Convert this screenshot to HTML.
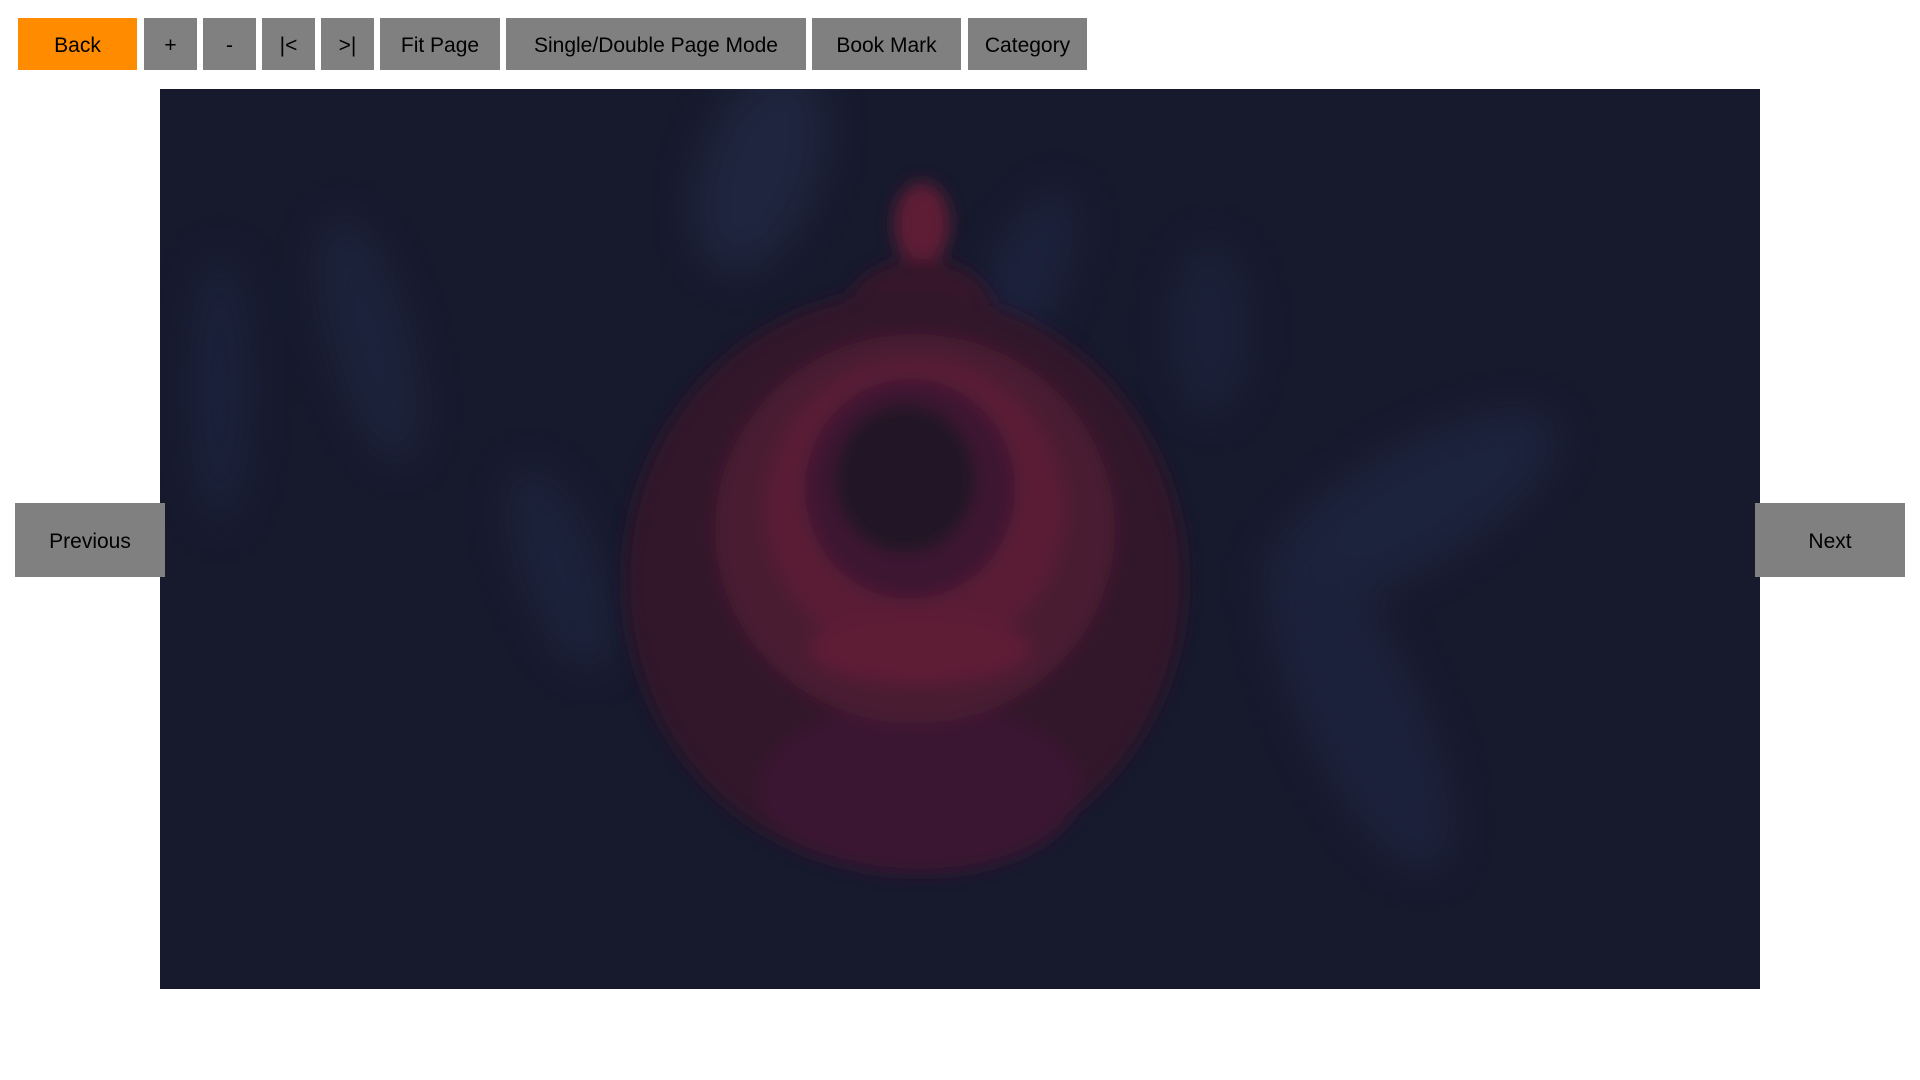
<!DOCTYPE html>
<html><head><meta charset="utf-8"><style>
html,body{margin:0;padding:0;width:1920px;height:1080px;background:#fff;overflow:hidden;font-family:"Segoe UI","Liberation Sans",sans-serif;}
.b{position:absolute;top:18px;height:52px;background:#808080;color:#000;font-size:21px;display:flex;align-items:center;justify-content:center;box-sizing:border-box;padding-top:4px;}
.img{position:absolute;left:160px;top:89px;width:1600px;height:900px;background:#171a2d;overflow:hidden;}
.nav{position:absolute;top:503px;height:74px;background:#808080;font-size:21px;display:flex;align-items:center;justify-content:center;box-sizing:border-box;padding-top:4px;}
</style></head><body>
<div class="b" style="left:18px;width:119px;background:#ff8c00">Back</div>
<div class="b" style="left:144px;width:53px">+</div>
<div class="b" style="left:203px;width:53px">-</div>
<div class="b" style="left:262px;width:53px">|&lt;</div>
<div class="b" style="left:321px;width:53px">&gt;|</div>
<div class="b" style="left:380px;width:120px">Fit Page</div>
<div class="b" style="left:506px;width:300px">Single/Double Page Mode</div>
<div class="b" style="left:812px;width:149px">Book Mark</div>
<div class="b" style="left:968px;width:119px">Category</div>
<div class="img">
<svg width="1600" height="900" viewBox="0 0 1600 900">
<defs>
<filter id="bl" x="-50%" y="-50%" width="200%" height="200%"><feGaussianBlur stdDeviation="22"/></filter>
<filter id="bl2" x="-50%" y="-50%" width="200%" height="200%"><feGaussianBlur stdDeviation="8"/></filter>
</defs>
<g filter="url(#bl)" opacity="0.3">
<ellipse cx="600" cy="80" rx="60" ry="110" fill="#34426a" transform="rotate(20 600 80)"/>
<ellipse cx="210" cy="250" rx="40" ry="130" fill="#2c3a62" transform="rotate(-15 210 250)"/>
<ellipse cx="60" cy="300" rx="30" ry="140" fill="#283660"/>
<ellipse cx="1250" cy="420" rx="170" ry="60" fill="#2c3a66" transform="rotate(-30 1250 420)"/>
<ellipse cx="1200" cy="620" rx="60" ry="180" fill="#2a3560" transform="rotate(-25 1200 620)"/>
<ellipse cx="400" cy="480" rx="40" ry="110" fill="#2c3860" transform="rotate(-20 400 480)"/>
<ellipse cx="860" cy="200" rx="40" ry="110" fill="#2a3560" transform="rotate(25 860 200)"/>
<ellipse cx="1050" cy="240" rx="40" ry="90" fill="#263258"/>
</g>
<g filter="url(#bl2)">
<ellipse cx="762" cy="135" rx="28" ry="42" fill="#5e1a35"/>
<ellipse cx="760" cy="225" rx="75" ry="55" fill="#34152a"/>
<ellipse cx="745" cy="492" rx="280" ry="290" fill="#30162a"/>
<ellipse cx="760" cy="700" rx="160" ry="85" fill="#3a1630"/>
<ellipse cx="755" cy="440" rx="200" ry="195" fill="#4a1a30"/>
<ellipse cx="755" cy="420" rx="150" ry="150" fill="#5a1c34"/>
<ellipse cx="750" cy="400" rx="105" ry="110" fill="#3c1830"/>
<ellipse cx="745" cy="390" rx="70" ry="75" fill="#201626"/>
<ellipse cx="760" cy="560" rx="110" ry="35" fill="#5e1c36"/>
</g>
</svg>
</div>
<div class="nav" style="left:15px;width:150px">Previous</div>
<div class="nav" style="left:1755px;width:150px">Next</div>
</body></html>
